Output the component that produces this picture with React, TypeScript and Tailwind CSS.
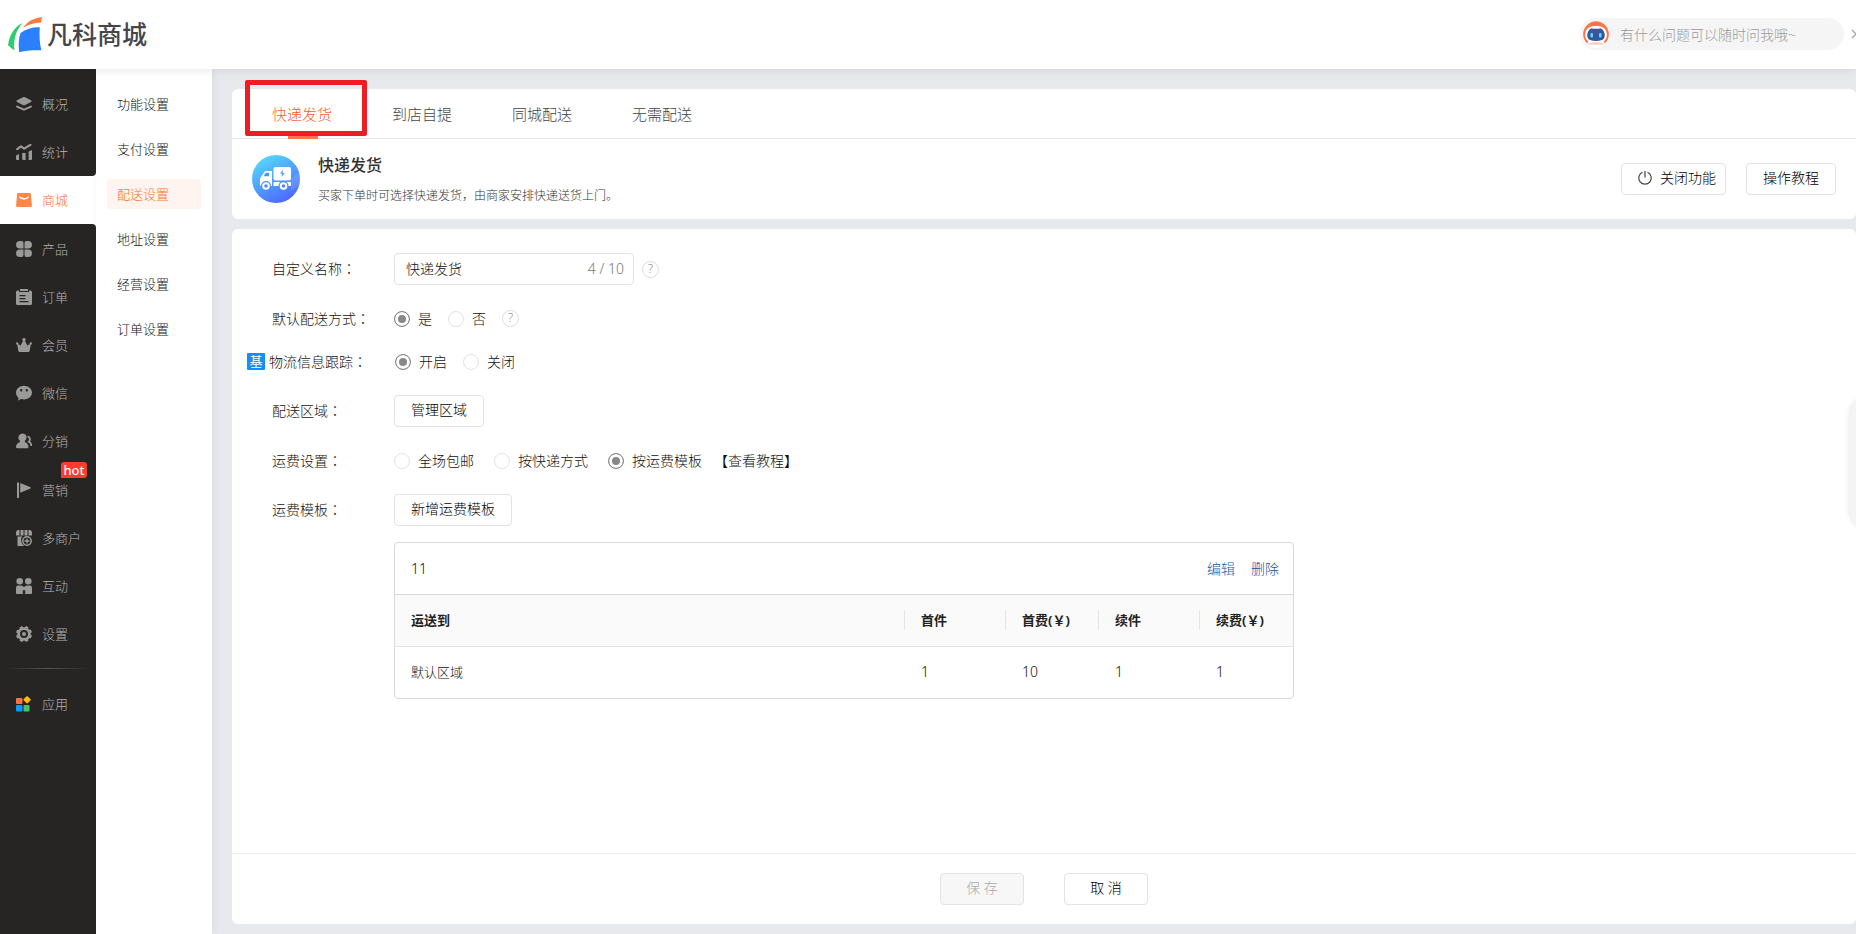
import { useState } from "react";
import type { ReactNode } from "react";
import clsx from "clsx";

interface MenuItem {
  name: string;
  icon: ReactNode;
  hot?: boolean;
}

interface Option {
  value: string;
  label: string;
}

const ACTIVE_MENU = "商城";

const svg = (children: ReactNode) => (
  <svg viewBox="0 0 16 16" className="h-4 w-4 shrink-0 text-[#9a9a99] group-data-active:text-[#ff8549]" fill="currentColor" aria-hidden="true">
    {children}
  </svg>
);

const menus: MenuItem[] = [
  {
    name: "概况",
    icon: svg(
      <>
        <path d="M6.9 1.3 1 4.3a.9.9 0 0 0 0 1.6l5.9 3a2.6 2.6 0 0 0 2.2 0l5.9-3a.9.9 0 0 0 0-1.6l-5.9-3a2.6 2.6 0 0 0-2.2 0z" />
        <path d="M1.1 10.6 7.3 13.4a1.8 1.8 0 0 0 1.4 0l6.2-2.8" fill="none" stroke="currentColor" strokeWidth="2" strokeLinecap="round" />
      </>
    ),
  },
  {
    name: "统计",
    icon: svg(
      <>
        <path d="M1.2 5.2 5 2.4l3.2 2.2L14.4.9" fill="none" stroke="currentColor" strokeWidth="2.2" strokeLinecap="round" strokeLinejoin="round" />
        <path d="M0 11.5 3 10v6H1a1 1 0 0 1-1-1zM6.2 9h3.4v7H7.2a1 1 0 0 1-1-1zM12.6 7.5 16 6v9a1 1 0 0 1-1 1h-2.4z" />
      </>
    ),
  },
  {
    name: "商城",
    icon: svg(
      <path
        fillRule="evenodd"
        d="M2.6 1h10.8a1.5 1.5 0 0 1 1.5 1.3l1 11a1.6 1.6 0 0 1-1.6 1.7H1.7a1.6 1.6 0 0 1-1.6-1.7l1-11A1.5 1.5 0 0 1 2.6 1zM3.6 4.4a.6.6 0 0 0-.3 1C5.9 8.2 10.1 8.2 12.7 5.4a.6.6 0 0 0-.9-.9C9.6 6.5 6.4 6.5 4.3 4.6a.6.6 0 0 0-.7-.2z"
      />
    ),
  },
  {
    name: "产品",
    icon: svg(
      <path d="M3.8 0h1.7a2 2 0 0 1 2 2v5.500H3.8A3.7 3.7 0 0 1 3.8 0zM12.2 0a3.7 3.7 0 0 1 0 7.500H8.500V2a2 2 0 0 1 2-2zM3.8 8.500h3.700V14a2 2 0 0 1-2 2H3.800a3.700 3.700 0 0 1 0-7.500zM8.500 8.500h3.700a3.700 3.700 0 0 1 0 7.500h-1.700a2 2 0 0 1-2-2z" />
    ),
  },
  {
    name: "订单",
    icon: svg(
      <path
        fillRule="evenodd"
        d="M4 0h8v2H4zM1.5 1.500H3V3h10V1.500h1.500A1.500 1.500 0 0 1 16 3v11.500a1.500 1.500 0 0 1-1.500 1.500h-13A1.500 1.500 0 0 1 0 14.500V3a1.500 1.500 0 0 1 1.500-1.500zM3.500 6v1.300h6V6zm0 3v1.300h6V9zm0 3v1.300h9V12z"
      />
    ),
  },
  {
    name: "会员",
    icon: svg(
      <>
        <circle cx="8" cy="2.6" r="1.7" />
        <circle cx="1.2" cy="6.4" r="1.2" />
        <circle cx="14.8" cy="6.4" r="1.2" />
        <path d="M1 6.500 4.600 8.500 7.300 3.500h1.400l2.700 5L15 6.500 13.600 14a1.300 1.300 0 0 1-1.300 1H3.700a1.300 1.300 0 0 1-1.300-1z" />
      </>
    ),
  },
  {
    name: "微信",
    icon: svg(
      <path
        fillRule="evenodd"
        d="M8 .7c4.500 0 8 3.100 8 6.900s-3.500 6.900-8 6.900c-1 0-2-.1-2.900-.4L2.200 15.500l.3-2.700C.9 11.500 0 9.700 0 7.600 0 3.800 3.500.7 8 .7zM5.200 4.100a1.200 1.200 0 1 0 0 2.400 1.200 1.200 0 0 0 0-2.400zm5.600 0a1.200 1.200 0 1 0 0 2.400 1.200 1.200 0 0 0 0-2.400z"
      />
    ),
  },
  {
    name: "分销",
    icon: svg(
      <>
        <path d="M6.500.5a4 4 0 0 1 2.300 7.300v1.100c2 .8 3.700 2.500 3.700 5.200a1.200 1.200 0 0 1-1.200 1.200H1.200A1.200 1.200 0 0 1 0 14.100c0-2.700 1.600-4.400 4-5.200V7.700A4 4 0 0 1 6.500.5z" />
        <path d="M11.500 3.400c2.600.6 3.300 3.900 1.300 5.400 1.700.8 2.600 2 2.600 4.200" fill="none" stroke="currentColor" strokeWidth="1.8" />
      </>
    ),
  },
  {
    name: "营销",
    hot: true,
    icon: svg(<path d="M1 .5h2V16H1zM4.200 1l10.300 4.300a.6.6 0 0 1 0 1.100L4.200 10.800z" />),
  },
  {
    name: "多商户",
    icon: svg(
      <>
        <path d="M1.500 0h2v5.500H0V2zM4.500 0h3v5.500h-3zM8.500 0h3v5.500h-3zM12.500 0h2L16 2v3.500h-3.500z" />
        <path d="M1.500 6.500h4.700L5 9l.7 4.200L8 16H1.500z" />
        <circle cx="11" cy="11" r="4.2" fill="none" stroke="currentColor" strokeWidth="1.5" />
        <path d="M10.300 8.500h1.400v1.800h1.800v1.400h-1.800v1.800h-1.400v-1.800H8.500v-1.400h1.800z" />
      </>
    ),
  },
  {
    name: "互动",
    icon: svg(
      <>
        <circle cx="3.7" cy="3.3" r="3.3" />
        <circle cx="12.3" cy="3.3" r="3.3" />
        <path d="M2 7.500h3.500L8 9l2.500-1.500H14a2 2 0 0 1 2 2V15a1 1 0 0 1-1 1H9.200v-3.800H6.800V16H1a1 1 0 0 1-1-1V9.500a2 2 0 0 1 2-2z" />
      </>
    ),
  },
  {
    name: "设置",
    icon: svg(
      <>
        <path
          fillRule="evenodd"
          d="M8 1.200a6.800 6.800 0 1 1 0 13.600A6.800 6.800 0 0 1 8 1.200zM8 4a4 4 0 1 0 0 8 4 4 0 0 0 0-8z"
        />
        <circle cx="8" cy="8" r="2" />
        {[22, 67, 112, 157, 202, 247, 292, 337].map((deg) => (
          <rect key={deg} x="6.3" y="0" width="3.4" height="3" rx="1" transform={`rotate(${deg} 8 8)`} />
        ))}
      </>
    ),
  },
];

const appIcon = (
  <svg viewBox="0 0 16 16" className="h-4 w-4 shrink-0" aria-hidden="true">
    <rect x="0" y="2" width="6.5" height="6" rx="1" fill="#ff7043" />
    <rect x="8.3" y="1" width="5.6" height="5.6" rx="1" fill="#ffc107" transform="rotate(45 11.1 3.8)" />
    <rect x="0" y="9" width="6.5" height="6.5" rx="1" fill="#0a9bff" />
    <rect x="7.5" y="9" width="6" height="6.5" rx="1" fill="#4cc264" />
  </svg>
);

const subMenus = ["功能设置", "支付设置", "配送设置", "地址设置", "经营设置", "订单设置"];
const tabs = ["快递发货", "到店自提", "同城配送", "无需配送"];

const buttonClass =
  "h-8 rounded-[4px] border border-[#e3e3e5] bg-white pb-[2px] text-[14px] leading-[20px] text-black cursor-pointer";

function MenuLink({ item, active }: { item: MenuItem; active?: boolean }) {
  return (
    <a
      href="#"
      data-active={active || undefined}
      className={clsx(
        "group relative flex min-h-0 flex-1 items-center gap-[10px] pb-[1px] pl-4 text-[13px] leading-[20px]",
        active ? "text-[#ff6f2b]" : "text-[#b4b4b3]"
      )}
    >
      {item.icon}
      <span>{item.name}</span>
      {item.hot && (
        <span className="absolute -top-[4px] left-[61px] h-4 w-[26px] rounded-t-[3px] rounded-br-[3px] bg-[#ff3a2f] text-center text-[13px] leading-[16px] font-medium text-white">
          hot
        </span>
      )}
    </a>
  );
}

function Sidebar() {
  const index = menus.findIndex((m) => m.name === ACTIVE_MENU);
  return (
    <aside className="flex w-24 shrink-0 flex-col bg-white">
      <nav className="flex flex-1 flex-col">
        <div className="rounded-br-[4px] bg-[#262523] pt-[11px]">
          <div className="flex h-24 flex-col">
            {menus.slice(0, index).map((item) => (
              <MenuLink key={item.name} item={item} />
            ))}
          </div>
        </div>
        <div className="flex h-12 flex-col pt-[1px]">
          <MenuLink item={menus[index]} active />
        </div>
        <div className="flex-1 rounded-tr-[4px] bg-[#262523] pt-[1px]">
          <div className="flex h-[434px] flex-col">
            {menus.slice(index + 1).map((item) => (
              <MenuLink key={item.name} item={item} />
            ))}
          </div>
          <div className="mx-2 mt-[9px] h-px bg-linear-to-r from-transparent via-[#55544f] to-transparent" />
          <div className="mt-[11px] flex h-12 flex-col">
            <MenuLink item={{ name: "应用", icon: appIcon }} />
          </div>
        </div>
      </nav>
    </aside>
  );
}

function Logo() {
  return (
    <div className="flex items-center gap-[5px]">
      <svg viewBox="0 0 34 36" className="h-9 w-[34px]" aria-hidden="true">
        <path d="M15 11C19.500 4.500 26 .8 34 .3c-.3 1.800-.6 3.500-.9 5.300C26 5.900 20 7.600 15 11z" fill="#ff7a38" />
        <path d="M14.500 5.900C6.500 9.700 1.500 17.500 0 28.200c2 2 4.200 3.800 6.400 5.200C5.300 22.500 8 12.700 14.500 5.900z" fill="#2ecc71" />
        <path d="M12.500 16C18 11.800 24.500 10 31.800 10.300c-.6 7.800-.3 15.700 1.600 23-7.500-.4-15 .1-22.300 1.900C10.500 28.500 10.300 22 12.500 16z" fill="#2a80ff" />
      </svg>
      <span className="pb-[2px] text-[25px] leading-[32px] font-medium text-[#45454c]">凡科商城</span>
    </div>
  );
}

function RobotIcon() {
  return (
    <svg viewBox="0 0 28 28" className="h-7 w-7 shrink-0" aria-hidden="true">
      <circle cx="14" cy="14.5" r="13.5" fill="#fff" />
      <path d="M5 23.500A12.900 12.900 0 1 1 23 23.500l-1.200-1.700H6.200z" fill="#ff7447" />
      <rect x="3" y="6" width="22" height="17.5" rx="8.7" fill="#fff" />
      <path d="M7 23.300c4.500-1.200 9.500-1.200 14 0l1.200 1.200H5.800z" fill="#ffc4b0" />
      <path d="M7.500 9.500c1.200-1.300 2.400-1 3.700-.7h5.600c1.300-.3 2.500-.6 3.700.7 2.300 2.500 2.900 6 1.700 8.600-1.200 2.300-3.900 2.900-8.200 2.900s-7-.6-8.200-2.900C4.600 15.500 5.200 12 7.500 9.500z" fill="#39559b" />
      <rect x="8.5" y="13" width="2.5" height="4.5" rx="1.2" fill="#55dcff" />
      <rect x="17" y="13" width="2.5" height="4.5" rx="1.2" fill="#55dcff" />
    </svg>
  );
}

function TruckIcon() {
  return (
    <svg viewBox="0 0 48 48" className="h-12 w-12 shrink-0" aria-hidden="true">
      <defs>
        <linearGradient id="truck-bg" x1="0.2" y1="0" x2="0.75" y2="1">
          <stop offset="0" stopColor="#54dcff" />
          <stop offset="1" stopColor="#4d62ff" />
        </linearGradient>
      </defs>
      <circle cx="24" cy="24" r="24" fill="url(#truck-bg)" />
      <path d="m39 24 7.500-6.500c1.800 4.500 1.900 9 .4 13.500L39 36z" fill="#fff" opacity=".12" />
      <rect x="21.5" y="12" width="17.5" height="13.5" rx="2" fill="#fff" />
      <path d="M21.500 27h17.500v3a1 1 0 0 1-1 1H21.500z" fill="#fff" />
      <path d="M14.500 16H20v15H9a1 1 0 0 1-1-1v-5.500a4 4 0 0 1 .7-2.200l3.500-5a2.800 2.800 0 0 1 2.300-1.300z" fill="#fff" />
      <path d="M14.300 17.800H17v3.400h-5.500l2-3a1 1 0 0 1 .8-.4z" fill="#3f9df8" />
      <path d="m30.800 14.500-2.800 4h2L29.500 22l3.300-4h-2.200z" fill="#4a9dff" />
      <circle cx="14" cy="31" r="5" fill="#4a8cff" />
      <circle cx="31.5" cy="31" r="5" fill="#4a8cff" />
      <circle cx="14" cy="31" r="2.8" fill="none" stroke="#fff" strokeWidth="2" />
      <circle cx="31.5" cy="31" r="2.8" fill="none" stroke="#fff" strokeWidth="2" />
    </svg>
  );
}

function HelpButton() {
  return (
    <button
      type="button"
      aria-label="帮助"
      className="flex h-[17px] w-[17px] items-center justify-center rounded-full border border-[#dcdce2] text-[12px] leading-[14px] text-[#8a8a92]"
    >
      ?
    </button>
  );
}

interface RadioGroupProps {
  name: string;
  label: string;
  options: Option[];
  value: string;
  wide?: boolean;
  onChange: (value: string) => void;
}

function RadioGroup({ name, label, options, value, wide, onChange }: RadioGroupProps) {
  return (
    <div role="radiogroup" aria-label={label} className={clsx("flex items-center", wide ? "gap-x-5" : "gap-x-4")}>
      {options.map((option) => (
        <label key={option.value} className="flex items-center gap-2">
          <input
            type="radio"
            name={name}
            value={option.value}
            checked={value === option.value}
            onChange={() => onChange(option.value)}
            className="h-4 w-4 shrink-0 appearance-none rounded-full border border-[#e3e3e5] bg-white checked:border-[#888] checked:bg-[#888] checked:shadow-[inset_0_0_0_3px_white]"
          />
          <span>{option.label}</span>
        </label>
      ))}
    </div>
  );
}

function FormRow({ label, htmlFor, badge, children }: { label: string; htmlFor?: string; badge?: string; children: ReactNode }) {
  const text = (
    <>
      {label}
      <span className="font-['Noto_Sans_CJK_JP',sans-serif]">：</span>
    </>
  );
  return (
    <div className="flex h-8 items-center">
      <div className={clsx("flex shrink-0 items-center pb-[2px]", badge ? "w-[148px] gap-1" : "ml-[25px] w-[122px]")}>
        {badge && (
          <span className="h-[17px] w-[18px] rounded-[1px] bg-[#108fff] text-center text-[13px] leading-[17px] font-normal text-white">{badge}</span>
        )}
        {htmlFor ? <label htmlFor={htmlFor}>{text}</label> : <span>{text}</span>}
      </div>
      {children}
    </div>
  );
}

function TemplateTable() {
  const columns = ["首件", "首费(￥)", "续件", "续费(￥)"];
  const rows = [{ area: "默认区域", values: ["1", "10", "1", "1"] }];

  return (
    <div className="mt-4 ml-[147px] max-w-[900px] overflow-hidden rounded-[4px] border border-[#d9d9db]">
      <div className="flex h-[52px] items-center gap-4 border-b border-[#d9d9db] pt-[1px] pr-[14px] pl-4">
        <span className="flex-1">11</span>
        <a href="#" className="text-[#1a56a8]">编辑</a>
        <a href="#" className="text-[#1a56a8]">删除</a>
      </div>
      <table className="w-full table-fixed text-left text-[13px]">
        <colgroup>
          <col />
          <col className="w-[101px]" />
          <col className="w-[93px]" />
          <col className="w-[101px]" />
          <col className="w-[94px]" />
        </colgroup>
        <thead>
          <tr className="h-[51px] border-b border-[#e5e5e7] bg-[#fafafa] text-[#222]">
            <th className="pl-4 font-bold">运送到</th>
            {columns.map((column) => (
              <th key={column} className="font-bold">
                <div className="border-l border-[#e5e5e7] pl-4">{column}</div>
              </th>
            ))}
          </tr>
        </thead>
        <tbody>
          {rows.map((row) => (
            <tr key={row.area} className="h-[52px]">
              <td className="pl-4">{row.area}</td>
              {row.values.map((value, i) => (
                <td key={i} className="pl-[17px] text-[14px]">{value}</td>
              ))}
            </tr>
          ))}
        </tbody>
      </table>
    </div>
  );
}

export default function App() {
  const [activeTab, setActiveTab] = useState("快递发货");
  const [name, setName] = useState("快递发货");
  const [isDefault, setIsDefault] = useState("yes");
  const [tracking, setTracking] = useState("on");
  const [freight, setFreight] = useState("template");

  return (
    <div className="relative flex min-h-screen flex-col overflow-hidden bg-[#e8e9ed] font-['Noto_Sans','Noto_Sans_CJK_SC',sans-serif] text-[14px] leading-[20px] font-light text-[#111]">
      {/* Header */}
      <header className="z-10 flex h-[69px] shrink-0 items-center justify-between bg-white pl-2 shadow-[0_2px_10px_rgba(0,0,0,0.08)]">
        <Logo />
        <div className="flex items-center pb-[1px]">
          <label className="mr-[7px] flex h-8 w-[264px] items-center gap-[10px] rounded-full bg-[#f5f5f5] pl-[2px]">
            <RobotIcon />
            <input
              type="text"
              aria-label="提问"
              placeholder="有什么问题可以随时问我哦~"
              className="w-[210px] bg-transparent pt-[1px] outline-none placeholder:text-[#999]"
            />
          </label>
          <button type="button" aria-label="关闭" className="w-[5px] overflow-hidden">
            <svg viewBox="0 0 10 10" className="h-[10px] w-[10px] max-w-none" stroke="#aaa" strokeWidth="1.5">
              <path d="M1 1l8 8M9 1L1 9" />
            </svg>
          </button>
        </div>
      </header>

      <div className="flex flex-1">
        <Sidebar />

        {/* Sub menu */}
        <nav className="z-[1] flex w-[116px] shrink-0 flex-col gap-[15px] bg-white px-[11px] pt-5 shadow-[2px_0_8px_rgba(0,0,0,0.05)]">
          {subMenus.map((item) => (
            <a
              key={item}
              href="#"
              className={clsx(
                "flex h-[30px] items-center rounded-[4px] pb-[1px] pl-[10px] text-[13px]",
                item === "配送设置" && "bg-[#fff4ef] text-[#ff6f2b]"
              )}
            >
              {item}
            </a>
          ))}
        </nav>

        {/* Main content */}
        <main className="flex min-w-0 flex-1 flex-col gap-[10px] pt-5 pb-[10px] pl-5">
          <section className="rounded-[6px] bg-white">
            <div role="tablist" className="flex h-[50px] border-b border-[#e5e5e7] pl-[10px]">
              {tabs.map((tab) => (
                <button
                  key={tab}
                  type="button"
                  role="tab"
                  aria-selected={activeTab === tab}
                  onClick={() => setActiveTab(tab)}
                  className={clsx("relative w-[120px] pt-[1px] text-[15px]", activeTab === tab ? "text-[#ff5a2c]" : "text-[#444]")}
                >
                  {tab}
                  {activeTab === tab && <span className="absolute -bottom-px left-[46px] h-[3px] w-[30px] bg-[#ff734c]" />}
                  {tab === "快递发货" && (
                    <span className="absolute -top-[9px] left-[3px] h-14 w-[122px] rounded-[2px] border-[5px] border-[#ee1c25]" />
                  )}
                </button>
              ))}
            </div>
            <div className="flex h-20 items-center gap-5 px-5">
              <div className="flex flex-1 items-center gap-[18px]">
                <TruckIcon />
                <div className="flex flex-col gap-[10px] pt-[2px]">
                  <h1 className="text-[16px] leading-[22px] font-medium text-[#333]">快递发货</h1>
                  <p className="text-[12px] text-[#333]">买家下单时可选择快递发货，由商家安排快递送货上门。</p>
                </div>
              </div>
              <button type="button" className={clsx(buttonClass, "flex w-[105px] items-center gap-2 pl-4")}>
                <svg viewBox="0 0 14 14" className="h-[14px] w-[14px]" fill="none" stroke="#444" strokeWidth="1.2" aria-hidden="true">
                  <path d="M4.500 1.300a6.200 6.200 0 1 0 5 0M7 0v6.500" />
                </svg>
                关闭功能
              </button>
              <button type="button" className={clsx(buttonClass, "w-[90px]")}>操作教程</button>
            </div>
          </section>

          <section className="flex flex-1 flex-col rounded-[6px] bg-white">
            <div className="flex-1 pt-6 pr-5 pl-[15px]">
              <FormRow label="自定义名称" htmlFor="custom-name">
                <div className="flex h-8 w-[240px] items-center rounded-[4px] border border-[#e3e3e5] pr-[9px] pl-[11px]">
                  <input
                    id="custom-name"
                    type="text"
                    maxLength={10}
                    value={name}
                    onChange={(e) => setName(e.target.value)}
                    className="min-w-0 flex-1 outline-none"
                  />
                  <span className="text-[#777]">{name.length} / 10</span>
                </div>
                <div className="ml-2">
                  <HelpButton />
                </div>
              </FormRow>
              <div className="mt-[18px]">
                <FormRow label="默认配送方式">
                  <RadioGroup
                    name="default"
                    label="默认配送方式"
                    options={[{ value: "yes", label: "是" }, { value: "no", label: "否" }]}
                    value={isDefault}
                    onChange={setIsDefault}
                  />
                  <div className="ml-4 pb-[2px]">
                    <HelpButton />
                  </div>
                </FormRow>
              </div>
              <div className="mt-[11px]">
                <FormRow label="物流信息跟踪" badge="基">
                  <RadioGroup
                    name="tracking"
                    label="物流信息跟踪"
                    options={[{ value: "on", label: "开启" }, { value: "off", label: "关闭" }]}
                    value={tracking}
                    onChange={setTracking}
                  />
                </FormRow>
              </div>
              <div className="mt-[17px]">
                <FormRow label="配送区域">
                  <button type="button" className={clsx(buttonClass, "w-[90px]")}>管理区域</button>
                </FormRow>
              </div>
              <div className="mt-[18px]">
                <FormRow label="运费设置">
                  <RadioGroup
                    name="freight"
                    label="运费设置"
                    wide
                    options={[
                      { value: "free", label: "全场包邮" },
                      { value: "express", label: "按快递方式" },
                      { value: "template", label: "按运费模板" },
                    ]}
                    value={freight}
                    onChange={setFreight}
                  />
                  <a href="#" className="ml-3">【查看教程】</a>
                </FormRow>
              </div>
              <div className="mt-[17px]">
                <FormRow label="运费模板">
                  <button type="button" className={clsx(buttonClass, "w-[118px]")}>新增运费模板</button>
                </FormRow>
              </div>
              <TemplateTable />
            </div>
            <div className="flex h-[71px] items-center justify-center gap-10 border-t border-[#efeff0]">
              <button type="button" disabled className="h-8 w-[84px] rounded-[4px] border border-[#e3e3e5] bg-[#f7f7f7] pb-[2px] text-[#aaa]">
                保 存
              </button>
              <button type="button" className={clsx(buttonClass, "w-[84px]")}>取 消</button>
            </div>
          </section>
        </main>
      </div>

      {/* Collapsed floating panel */}
      <div className="absolute top-[396px] -right-[34px] h-[134px] w-10 rounded-[20px] bg-[#f4f4f4] shadow-[0_0_6px_rgba(0,0,0,0.12)]" />
    </div>
  );
}
